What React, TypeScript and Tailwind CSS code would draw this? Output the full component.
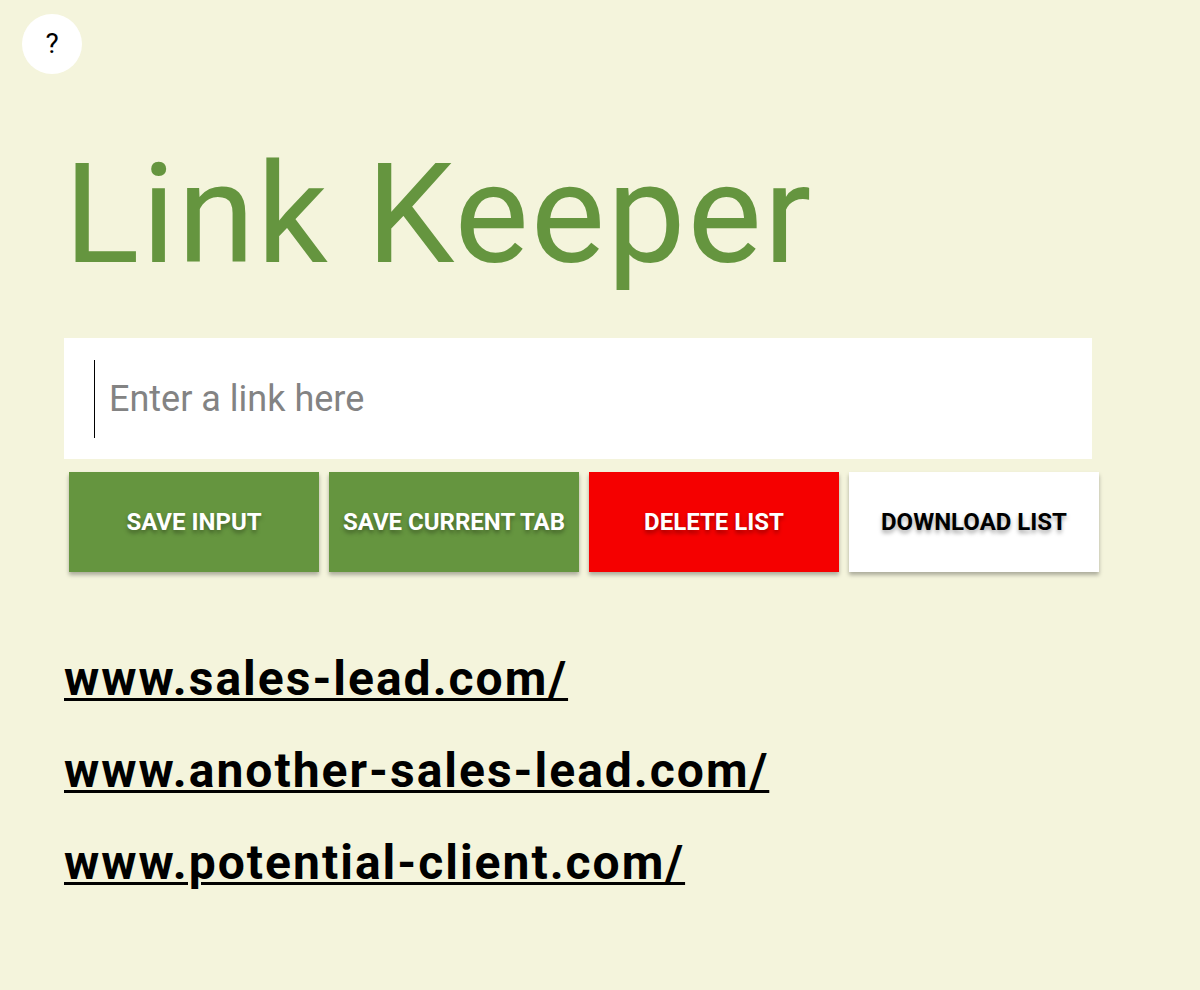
import { useState } from 'react';

const links = [
  'www.sales-lead.com/',
  'www.another-sales-lead.com/',
  'www.potential-client.com/',
];

export default function App() {
  const [value, setValue] = useState('');

  return (
    <div className="min-h-[990px] bg-[#f4f4dc] font-['Roboto',sans-serif]">
      {/* help bubble */}
      <div className="px-[22px] pt-[14px]">
        <button className="w-[60px] h-[60px] rounded-full bg-white text-black text-[28px] flex items-center justify-center">
          ?
        </button>
      </div>

      <div className="px-[64px]">
        <h1 className="text-[140px] leading-none font-normal text-[#65953f] mt-[70px] tracking-[2px]">
          Link Keeper
        </h1>

        {/* input */}
        <div className="mt-[54px] w-[1028px] h-[121px] bg-white pl-[30px] flex items-center">
          <div className="border-l border-black h-[78px] flex items-center pl-[14px] flex-1">
            <input
              value={value}
              onChange={(e) => setValue(e.target.value)}
              placeholder="Enter a link here"
              className="w-full outline-none text-[36px] text-black placeholder:text-[#838383] bg-transparent"
            />
          </div>
        </div>

        {/* buttons */}
        <div className="flex gap-[10px] mt-[13px] pl-[5px]">
          <button className="w-[250px] h-[100px] bg-[#65953f] text-white font-bold text-[24px] shadow-[0_3px_4px_rgba(0,0,0,0.3)] [text-shadow:0_3px_4px_rgba(0,0,0,0.35)]">
            SAVE INPUT
          </button>
          <button className="w-[250px] h-[100px] bg-[#65953f] text-white font-bold text-[24px] shadow-[0_3px_4px_rgba(0,0,0,0.3)] [text-shadow:0_3px_4px_rgba(0,0,0,0.35)]">
            SAVE CURRENT TAB
          </button>
          <button className="w-[250px] h-[100px] bg-[#f50000] text-white font-bold text-[24px] shadow-[0_3px_4px_rgba(0,0,0,0.3)] [text-shadow:0_3px_4px_rgba(0,0,0,0.35)]">
            DELETE LIST
          </button>
          <button className="w-[250px] h-[100px] bg-white text-black font-bold text-[24px] shadow-[0_3px_4px_rgba(0,0,0,0.3)] [text-shadow:0_3px_4px_rgba(0,0,0,0.35)]">
            DOWNLOAD LIST
          </button>
        </div>

        {/* saved links */}
        <ul className="mt-[61px] flex flex-col">
          {links.map((l) => (
            <li key={l} className="text-[48px] leading-[92px]">
              <a href="#" className="font-bold text-black underline underline-offset-[3px] decoration-[3px] tracking-[2px]">
                {l}
              </a>
            </li>
          ))}
        </ul>
      </div>
    </div>
  );
}
